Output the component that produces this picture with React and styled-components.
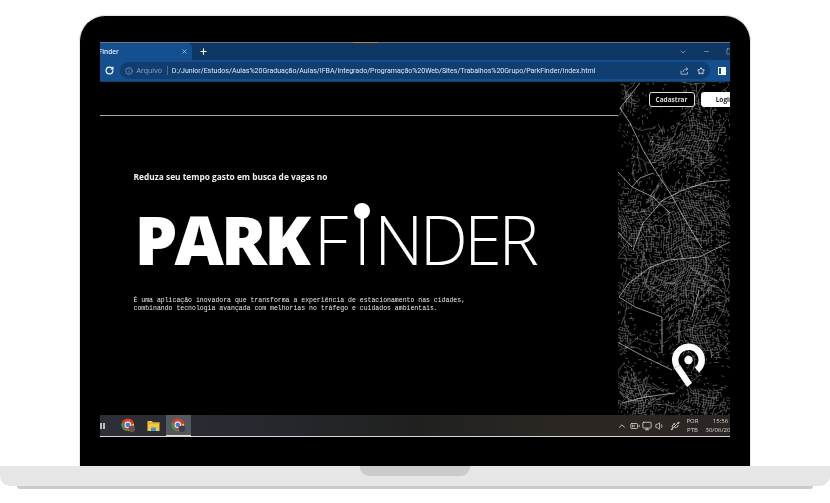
import React from "react";
import styled, { createGlobalStyle } from "styled-components";
import { ChevronDown, ChevronUp, Info, Minus, Plus, RotateCw, Square, Star, Volume1, X, Monitor, Usb, BatteryMedium } from "lucide-react";

const GlobalStyle = createGlobalStyle`
  html, body { margin: 0; padding: 0; background: #fff; }
  body { width: 830px; height: 503px; overflow: hidden; font-family: "Open Sans", "Liberation Sans", sans-serif; }
`;

const Page = styled.div`
  display: flex;
  flex-direction: column;
  align-items: center;
  padding-top: 15px;
`;

const Lid = styled.div`
  box-sizing: border-box;
  width: 672px;
  height: 451px;
  padding: 26px 20px 30px 19.5px;
  background: #000;
  border: 1.5px solid #e6e6e6;
  border-bottom: none;
  border-radius: 26px 26px 0 0;
`;

const Screen = styled.div`
  display: flex;
  flex-direction: column;
  width: 630px;
  height: 395px;
  overflow: hidden;
  background: #000;
  filter: blur(0.3px);
`;

const TabStrip = styled.div`
  display: flex;
  align-items: center;
  flex: none;
  position: relative;
  height: 18px;
  background: #0e3763;
  border-top: 1px solid #5d7893;
  box-sizing: border-box;
  color: #dbe6f2;
`;

const OrangeMark = styled.i`
  position: absolute;
  top: -1px;
  left: 253px;
  width: 25px;
  height: 1px;
  background: #b9854d;
`;

const Tab = styled.div`
  display: flex;
  align-items: center;
  justify-content: space-between;
  width: 92px;
  height: 100%;
  padding-right: 4px;
  box-sizing: border-box;
  overflow: hidden;
  background: #14508f;
  border-top-right-radius: 5px;
`;

const TabTitle = styled.span`
  margin-left: -15px;
  font: 600 6.5px "Open Sans", sans-serif;
  color: #e4edf6;
`;

const NewTab = styled.div`
  display: flex;
  margin-left: 7px;
  color: #fff;
`;

const WindowControls = styled.div`
  display: flex;
  align-items: center;
  gap: 16px;
  margin-left: auto;
  margin-right: -3px;
  color: #9fb6cf;
`;

const Toolbar = styled.div`
  display: flex;
  align-items: center;
  flex: none;
  height: 22px;
  padding-left: 5px;
  box-sizing: border-box;
  background: #14508f;
  color: #e6eef7;
  border-bottom: 1px solid #113f72;
`;

const Reload = styled.div`
  display: flex;
  width: 15px;
  color: #fff;
`;

const Omnibox = styled.div`
  display: flex;
  align-items: center;
  flex: none;
  width: 590px;
  height: 17px;
  padding: 0 5px;
  box-sizing: border-box;
  border-radius: 9px;
  background: #113e70;
  margin-right: 8px;
`;

const SiteLabel = styled.span`
  margin-left: 4px;
  padding-right: 5px;
  font: 400 7px "Open Sans", sans-serif;
  color: #8ba6c3;
  border-right: 1px solid #4a6e96;
`;

const Url = styled.span`
  margin-left: 4px;
  font: 400 7.03px Roboto, sans-serif;
  color: #dfe9f4;
  white-space: nowrap;
`;

const OmniIcons = styled.div`
  display: flex;
  align-items: center;
  gap: 8px;
  margin-left: auto;
  color: #b5c8dc;
`;

const SidePanelIcon = styled.div`
  flex: none;
  width: 8px;
  height: 8px;
  box-sizing: border-box;
  background: #14508f;
  border: 1.5px solid #fff;
  border-left-width: 5px;
  transform: scaleX(-1);
`;

const Content = styled.div`
  display: flex;
  flex: 1;
  min-height: 0;
`;

const Main = styled.main`
  display: flex;
  flex-direction: column;
  width: 518px;
  flex: none;
`;

const TopLine = styled.div`
  height: 33px;
  flex: none;
  border-bottom: 1px solid #a8a8a8;
`;

const Hero = styled.section`
  display: flex;
  flex-direction: column;
  padding: 55px 0 0 34px;
`;

const Lead = styled.p`
  margin: 0;
  font: 700 8.35px/12px "Open Sans", sans-serif;
  color: #f2f2f2;
  white-space: nowrap;
`;

const Wordmark = styled.h1`
  display: flex;
  align-items: baseline;
  margin: 20px 0 0 1px;
  height: 72px;
  font-size: 68px;
  line-height: 72px;
  color: #fff;
  white-space: nowrap;
`;

const Park = styled.span`
  font-weight: 800;
  letter-spacing: -2.9px;
`;

const Finder = styled.span`
  margin-left: 6px;
  font-weight: 300;
  letter-spacing: -3.5px;
`;

const DottedI = styled.span`
  position: relative;
  margin: 0 7px 0 9px;
  &::before {
    content: "";
    position: absolute;
    left: 50%;
    top: 11px;
    width: 16px;
    height: 16px;
    margin-left: -6.3px;
    border-radius: 50%;
    background: #fff;
  }
`;

const Blurb = styled.p`
  margin: 22px 0 0;
  font: 400 6.5px/8px "Liberation Mono", monospace;
  color: #e8e8e8;
  white-space: nowrap;
`;

const MapSide = styled.aside`
  position: relative;
  flex: 1;
  overflow: hidden;
  background: #000;
`;

const MapDrawing = styled.svg`
  position: absolute;
  inset: 0;
  width: 112px;
  height: 333px;
`;

const AuthRow = styled.div`
  position: relative;
  display: flex;
  gap: 6px;
  padding: 10px 0 0 31px;
`;

const AuthButton = styled.button`
  flex: none;
  width: ${(p) => (p.$solid ? "48px" : "46px")};
  height: 15px;
  padding: 0;
  border: 1px solid ${(p) => (p.$solid ? "#fff" : "#ddd")};
  border-radius: 3px;
  background: ${(p) => (p.$solid ? "#fff" : "#000")};
  color: ${(p) => (p.$solid ? "#222" : "#ddd")};
  font: 700 6.5px "Open Sans", sans-serif;
`;

const PinMark = styled.svg`
  position: absolute;
  left: 53px;
  top: 261px;
`;

const Taskbar = styled.footer`
  display: flex;
  align-items: center;
  flex: none;
  height: 22px;
  box-sizing: border-box;
  background: linear-gradient(90deg, #2c2f36 0%, #24272c 30%, #20211f 50%, #2c2723 75%, #2b2623 100%);
  border-bottom: 1px solid #d8d8d8;
  color: #d6d6d6;
`;

const StartGlyph = styled.div`
  flex: none;
  width: 5px;
  height: 6px;
  margin-right: 11px;
  background: repeating-linear-gradient(90deg, #bdbdbd 0 1.5px, transparent 1.5px 3px);
`;

const TaskItem = styled.div`
  display: flex;
  align-items: center;
  justify-content: center;
  flex: none;
  width: 25px;
  height: 100%;
  box-sizing: border-box;
  background: ${(p) => (p.$active ? "#55585e" : "transparent")};
  border-bottom: ${(p) => (p.$active ? "1px solid #efe3cf" : "none")};
`;

const Tray = styled.div`
  display: flex;
  align-items: center;
  gap: 2.5px;
  margin-left: auto;
  margin-right: -6px;
  flex: none;
`;

const NetworkIcon = styled(Usb)`
  margin-left: 3px;
`;

const Lang = styled.div`
  margin-left: -1px;
  width: 22px;
  font: 400 6px/9px "Open Sans", sans-serif;
  text-align: center;
`;

const Clock = styled.div`
  margin-left: -0.5px;
  width: 30px;
  font: 400 6px/9px "Open Sans", sans-serif;
  text-align: center;
  white-space: nowrap;
`;

const Base = styled.div`
  display: flex;
  justify-content: center;
  align-self: stretch;
  height: 20px;
  background: #e6e6e6;
  border-radius: 0 0 10px 10px;
`;

const Notch = styled.div`
  width: 110px;
  height: 10px;
  background: #cbcbcb;
  border-radius: 0 0 9px 9px;
`;

const BaseLip = styled.div`
  align-self: stretch;
  height: 3px;
  margin: 0 17px;
  background: #cbcbcb;
  border-radius: 0 0 3px 3px;
`;

// seeded so the map is the same on each load
const rng = (seed) => () => {
  seed = (seed + 0x6d2b79f5) | 0;
  let t = Math.imul(seed ^ (seed >>> 15), 1 | seed);
  t = (t + Math.imul(t ^ (t >>> 7), 61 | t)) ^ t;
  return ((t ^ (t >>> 14)) >>> 0) / 4294967296;
};

const MAIN_ROADS = [
  "M22 1L2 26L12 41L25 68L37 88L52 111L69 141L84 166",
  "M15 168L25 141L45 118L65 108L89 100L112 98",
  "M0 90L14 105L35 115L52 131",
  "M14 105L22 96L35 91",
  "M1 215L11 201L31 186L51 178L81 175L112 160",
  "M1 215L17 225L44 235",
  "M44 235L44 271",
  "M61 238L61 261",
  "M81 208L74 235",
  "M1 261L27 275L54 288",
  "M4 321L27 315L57 311",
  "M0 150L14 165",
];

// neighbourhoods with many streets: left, top, right, bottom
const DENSE = [
  [2, 5, 12, 21], [35, 48, 49, 75], [59, 41, 92, 85],
  [2, 121, 35, 165], [72, 115, 110, 148], [44, 175, 91, 225],
  [1, 185, 27, 208], [1, 241, 17, 255], [74, 241, 104, 275],
  [61, 315, 104, 331], [50, 130, 72, 170], [2, 300, 30, 331],
];

// parts of the map with almost no streets
const EMPTY = [
  [14, 221, 37, 245], [87, 285, 112, 305], [43, 275, 67, 295], [48, 90, 62, 104],
  [30, 20, 60, 40], [0, 66, 10, 84],
];

const density = (x, y) => {
  if (EMPTY.some(([a, b, c, d]) => x > a && x < c && y > b && y < d)) return 0.015;
  let v = 0.09;
  DENSE.forEach(([a, b, c, d]) => {
    const dx = (x - (a + c) / 2) / ((c - a) / 2.2);
    const dy = (y - (b + d) / 2) / ((d - b) / 2.2);
    v += 0.62 * Math.exp(-(dx * dx + dy * dy) / 2);
  });
  return Math.min(v, 0.68);
};

// street grid, bent a little so it does not look ruled
const warp = (x, y) => [
  x + 5 * Math.sin(y / 23) + 2 * Math.sin(y / 7),
  y + 5 * Math.sin(x / 17) + 2 * Math.sin(x / 6),
];

const buildMap = () => {
  const r = rng(41);
  const STEP = 2.5;
  const pt = (x, y) => warp(x, y).map((n) => n.toFixed(1)).join(" ");
  let fine = "";
  for (let y = -6; y < 340; y += STEP) {
    for (let x = -6; x < 118; x += STEP) {
      const d = density(x, y);
      if (r() < d) fine += `M${pt(x, y)}L${pt(x + STEP, y)}`;
      if (r() < d) fine += `M${pt(x, y)}L${pt(x, y + STEP)}`;
    }
  }
  let minor = "";
  for (let i = 0; i < 150; i++) {
    let x = r() * 112;
    let y = r() * 333;
    let dir = r() * 6.28;
    if (density(x, y) < 0.05) continue;
    minor += `M${x.toFixed(1)} ${y.toFixed(1)}`;
    for (let k = 0; k < 5; k++) {
      dir += (r() - 0.5) * 1.2;
      x += Math.cos(dir) * 5;
      y += Math.sin(dir) * 5;
      if (density(x, y) < 0.05) break;
      minor += `L${x.toFixed(1)} ${y.toFixed(1)}`;
    }
  }
  return { fine, minor };
};

const MAP = buildMap();

const CityMap = () => (
  <MapDrawing viewBox="0 0 112 333" fill="none">
    <path d={MAP.fine} stroke="#b0b0b0" strokeWidth="0.42" />
    <path d={MAP.minor} stroke="#a0a0a0" strokeWidth="0.45" />
    {MAIN_ROADS.map((d) => (
      <path key={d} d={d} stroke="#c8c8c8" strokeWidth="0.7" />
    ))}
  </MapDrawing>
);

const Pin = () => (
  <PinMark width="36" height="46" viewBox="0 0 36 46">
    <path d="M26 27.1A13.25 13.25 0 1 0 6 23.6" fill="none" stroke="#fff" strokeWidth="6.5" />
    <path d="M3.2 25.25L16 44L21 40L9 22Z" fill="#fff" />
    <circle cx="17.5" cy="17" r="4.2" fill="#fff" />
  </PinMark>
);

const ShareIcon = () => (
  <svg width="9" height="9" viewBox="0 0 9 9" fill="none" stroke="currentColor" strokeWidth="0.8">
    <path d="M1 4.5V8.2H7.4V6" />
    <path d="M3 6C3 4 4.6 3 7.6 3M5.8 1.2L7.8 3L5.8 4.8" />
  </svg>
);

const ChromeIcon = ({ badge }) => (
  <svg width="15" height="15" viewBox="0 0 15 15">
    <circle cx="6.8" cy="6.8" r="6.3" fill="#d8402f" />
    <path d="M1.2 3.8L4 10L6.8 13.1A6.3 6.3 0 0 1 1.2 3.8Z" fill="#2e9e49" />
    <path d="M6.8 13.1L10 7L13 5.5A6.3 6.3 0 0 1 6.8 13.1Z" fill="#f2c230" />
    <circle cx="6.8" cy="6.8" r="3.2" fill="#fff" />
    <circle cx="6.8" cy="6.8" r="2.4" fill="#3b7ce0" />
    <circle cx="10.8" cy="10.8" r="3.4" fill={badge} />
  </svg>
);

const FolderIcon = () => (
  <svg width="13" height="12" viewBox="0 0 13 12">
    <path d="M0.5 1H5L6 2.5H12.5V11H0.5Z" fill="#f5c63f" />
    <rect x="0.5" y="2.5" width="12" height="1.2" fill="#e5a92a" />
    <rect x="4" y="7.5" width="5" height="3.5" fill="#3c96d8" />
  </svg>
);

export default function App() {
  return (
    <>
      <GlobalStyle />
      <Page>
        <Lid>
          <Screen>
            <TabStrip>
              <OrangeMark />
              <Tab>
                <TabTitle>ParkFinder</TabTitle>
                <X size={7} strokeWidth={2} />
              </Tab>
              <NewTab>
                <Plus size={9} strokeWidth={3} />
              </NewTab>
              <WindowControls>
                <ChevronDown size={8} />
                <Minus size={7} />
                <Square size={7} />
              </WindowControls>
            </TabStrip>
            <Toolbar>
              <Reload>
                <RotateCw size={9} strokeWidth={3} />
              </Reload>
              <Omnibox>
                <Info size={8} color="#8ba6c3" />
                <SiteLabel>Arquivo</SiteLabel>
                <Url>D:/Junior/Estudos/Aulas%20Graduação/Aulas/IFBA/Integrado/Programação%20Web/Sites/Trabalhos%20Grupo/ParkFinder/index.html</Url>
                <OmniIcons>
                  <ShareIcon />
                  <Star size={8} color="#fff" strokeWidth={2.4} />
                </OmniIcons>
              </Omnibox>
              <SidePanelIcon />
            </Toolbar>
            <Content>
              <Main>
                <TopLine />
                <Hero>
                  <Lead>Reduza seu tempo gasto em busca de vagas no</Lead>
                  <Wordmark>
                    <Park>PARK</Park>
                    <Finder>
                      F<DottedI>I</DottedI>NDER
                    </Finder>
                  </Wordmark>
                  <Blurb>
                    É uma aplicação inovadora que transforma a experiência de estacionamento nas cidades,
                    <br />
                    combinando tecnologia avançada com melhorias no tráfego e cuidados ambientais.
                  </Blurb>
                </Hero>
              </Main>
              <MapSide>
                <CityMap />
                <AuthRow>
                  <AuthButton>Cadastrar</AuthButton>
                  <AuthButton $solid>Login</AuthButton>
                </AuthRow>
                <Pin />
              </MapSide>
            </Content>
            <Taskbar>
              <StartGlyph />
              <TaskItem>
                <ChromeIcon badge="#6a5148" />
              </TaskItem>
              <TaskItem>
                <FolderIcon />
              </TaskItem>
              <TaskItem $active>
                <ChromeIcon badge="#3d3d52" />
              </TaskItem>
              <Tray>
                <ChevronUp size={10} />
                <BatteryMedium size={10} />
                <Monitor size={10} />
                <Volume1 size={10} />
                <NetworkIcon size={10} />
                <Lang>
                  POR
                  <br />
                  PTB
                </Lang>
                <Clock>
                  15:56
                  <br />
                  30/06/2023
                </Clock>
              </Tray>
            </Taskbar>
          </Screen>
        </Lid>
        <Base>
          <Notch />
        </Base>
        <BaseLip />
      </Page>
    </>
  );
}
